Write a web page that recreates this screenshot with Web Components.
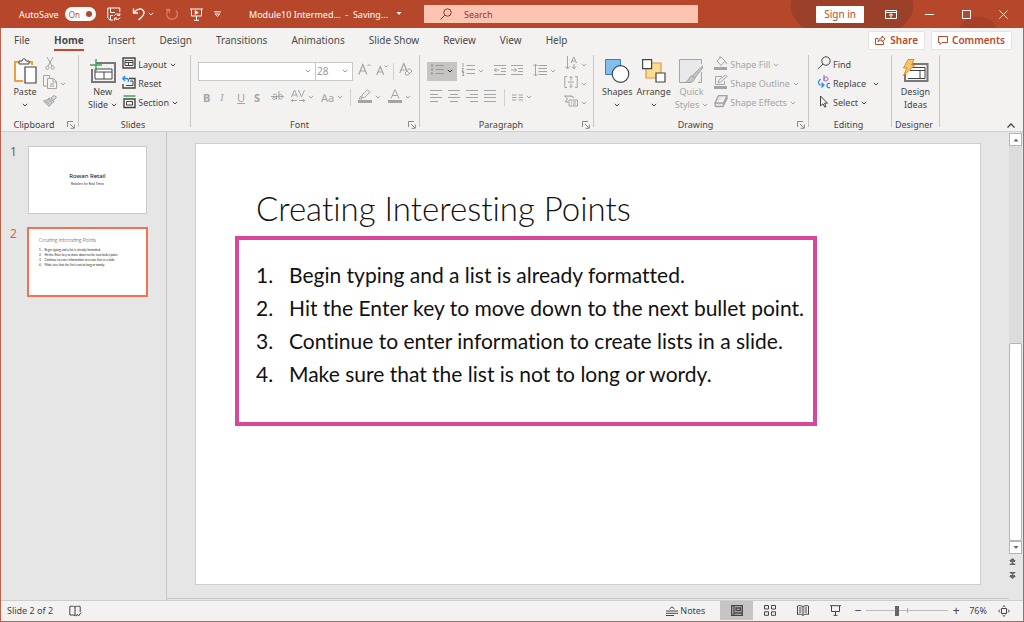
<!DOCTYPE html>
<html lang="en">
<head>
<meta charset="utf-8">
<title>Module10 Intermediate - PowerPoint</title>
<style>
body {
    margin: 0;
    font: 9px/13px "Noto Sans", "Open Sans", sans-serif;
    color: #444;
}
</style>
</head>
<body>
<pp-app></pp-app>
<script>
// every svg uses currentColor so that disabled tools only need a text colour
const ICONS = {
    caret: [6, 4, '<path d="M.8.8 3 3 5.200.8"/>'],
    down: [6, 4, '<path d="M.5 0h5L3 3z" fill="currentColor" stroke="none"/>'],
    up: [6, 4, '<path d="M.5 3.500h5L3 .5z" fill="currentColor" stroke="none"/>'],
    save: [14, 14, '<path d="M6 13H3L.8 11V1h12v4M3.500 1v4.500H8M3.500 13V8.500H6"/><path d="M7.500 8.500a3 3 0 0 1 5-.5M12.800 6v2.500h-2.500M13 10.500a3 3 0 0 1-5 1M7.500 13.500v-2.500H10"/>'],
    undo: [14, 14, '<path d="M1.500 1.500v4.500H6M1.800 5.800C4 2.500 8 .8 10.500 2.800 14.500 6 10 10 6.500 13" stroke-width="1.300"/>'],
    redo: [14, 14, '<path d="M3.500 3A5.300 5.300 0 1 0 11 3.500M1 2.500h3.500V6" stroke-width="1.300"/>'],
    present: [13, 13, '<path d="M0 1h13M1.500 1v7h10V1M6.500 8v4M4 12.300h5"/><path d="M5.200 2.700v3.600l3-1.800z" fill="currentColor"/>'],
    overflow: [7, 6, '<path d="M0 .8h7"/><path d="M1 3h5l-2.500 2.500z"/>'],
    search: [12, 12, '<circle cx="7.500" cy="4.500" r="3.700"/><path d="M4.800 7.200.5 11.500"/>'],
    find: [14, 14, '<circle cx="9" cy="5" r="4.200"/><path d="M6 8 .8 13"/>'],
    options: [12, 9, '<path d="M.5.5h11v8H.5zM.5 2.500h11" /><path d="M6 8V4M4 5.500 6 3.800l2 1.700"/>'],
    min: [9, 9, '<path d="M0 4.500h9"/>'],
    max: [9, 9, '<path d="M.5.5h8v8h-8z"/>'],
    close: [9, 9, '<path d="m.5.5 8 8M8.500.5l-8 8"/>'],
    share: [11, 10, '<path d="M3 3.500H.5v6h8V7M3 7c.3-3 2-4 4-4V1l3.200 3L7 7V5C5 5 4 5.500 3 7z"/>'],
    comment: [10, 9, '<path d="M.5.5h9v6H4L2 8.500v-2H.5z"/>'],
    paste: [24, 26, '<path d="M6 4H2v19h8M16 4h3v3" stroke="#e8a33d" stroke-width="2"/><path d="M3 5h15v17H3z" fill="#fafafa" stroke="none"/><path d="M6 6V3h3c0-3 4-3 4 0h3v3z" fill="#f8f8f8"/><path d="M12 9h11v16H12z" fill="#fff" stroke-width="1.200"/>'],
    cut: [14, 13, '<path d="M4 0l5 9M10 0 5 9"/><circle cx="4.300" cy="10.700" r="1.600"/><circle cx="9.700" cy="10.700" r="1.600"/>'],
    copy: [14, 14, '<path d="M4 11H.5V.5h6V3M4.500 3.500h6l3 3v7h-9zM10 3.500V7h3.500M7 9h4M7 11h4"/>'],
    painter: [14, 12, '<path d="m8 3 3-2.500 2.500 1.500L11 5z" fill="#ddd"/><path d="M6 3 11 6.500 9.500 8 5 4zM5 4.500.5 6 6 11.500 9 8M3 6.500l3 2" fill="#ccc"/>'],
    newslide: [26, 24, '<path d="M6 4h19v19H2v-13" stroke-width="2" stroke="#777"/><path d="M5 10h17v10H5zM5 13h17M14 13v7" fill="#fff"/><path d="M6 0v12M0 6h12" stroke="#41a35a" stroke-width="1.400"/>'],
    layout: [14, 12, '<path d="M1 1h12v10H1z" stroke-width="1.400"/><path d="M3 3.500h8v5H3zM3 5.500h8M6.500 5.500v3"/>'],
    reset: [14, 13, '<path d="M7 2.500h6v9.500H1V8" stroke-width="1.400"/><path d="M8 5h3v4.500H4"/><path d="M3 0 .8 2.500 3 5M1 2.500h3.500c2 0 2.500 2 1.500 3.500" stroke="#2b88d8" stroke-width="1.300"/>'],
    section: [13, 13, '<path d="M.5 1h12" stroke="#41a35a" stroke-width="1.500"/><path d="M1 4h11v8.500H1z" stroke-width="1.400"/><path d="M3.500 6.500h6V10h-6z"/>'],
    growA: [13, 13, '<path d="m.8 11.500 4-10 4 10M2.300 8h5" stroke-width="1.200"/><path d="m9.500 3 1.500-1.500L12.500 3"/>'],
    shrinkA: [12, 12, '<path d="m.8 11 3.500-8.500 3.500 8.500M2 8h4.500" stroke-width="1.200"/><path d="m8.500 1.500 1.500 1.500 1.500-1.500"/>'],
    clear: [14, 13, '<path d="m.8 10 4-9.500 3 7M2.300 7H7" stroke-width="1.200"/><path d="m6 10 4-4.500L13 8l-4 4H7zM8 8l2.500 2.500"/>'],
    strike: [13, 12, '<path d="M0 6.500h13"/><path d="M2 5c1-1.500 3.500-1 3.500.5V9.500M5.500 7C3 7 1.500 7.500 1.500 8.500s3 1.500 4-.5M8 1v8.500M8 6c1-2.500 3.500-1.500 3.500.8S9 10 8 8"/>'],
    spacing: [14, 14, '<path d="m.5 8 3-7 3 7M1.500 6h4M7.500 1l3 7 3-7"/><path d="M0 11.500h6M2 9.800.3 11.500 2 13.200M8 11.500h6M12 9.800l1.700 1.700L12 13.200"/>'],
    pen: [14, 14, '<path d="m3.500 9 .7-3L9.500.8l2.300 2.400L6.500 8.500zM3 7c-1 1-1.500 2-2 3h3"/><path d="M0 12.500h14" stroke-width="3"/>'],
    colorA: [14, 14, '<path d="m3 9.500 4-9 4 9M4.500 6.500h5"/><path d="M0 12.500h14" stroke-width="3"/>'],
    bullets: [13, 13, '<path d="M4.500 2.500H13M4.500 6.500H13M4.500 10.500H13"/><path d="M0 2.500h2M0 6.500h2M0 10.500h2" stroke-width="2"/>'],
    numbers: [13, 13, '<path d="M4.500 2.500H13M4.500 6.500H13M4.500 10.500H13M1 0v4M0 5.500h1.500L0 8.500h2M0 9.500h2l-1 1.500L2 12.500H0"/>'],
    outdent: [12, 12, '<path d="M0 1.500h12M7 4.500h5M7 7.500h5M0 10.500h12M0 6h5.500M2.500 4 .5 6l2 2"/>'],
    indent: [12, 12, '<path d="M0 1.500h12M7 4.500h5M7 7.500h5M0 10.500h12M0 6h5.500M3.500 4l2 2-2 2"/>'],
    lines: [14, 14, '<path d="M5.500 2.500H14M5.500 5.500H14M5.500 8.500H14M5.500 11.500H14M2.500 1v12M.5 3l2-2 2 2M.5 11l2 2 2-2"/>'],
    left: [13, 12, '<path d="M0 .5h12M0 4.500h8M0 7.500h12M0 11.500h8"/>'],
    center: [13, 12, '<path d="M0 .5h12M2 4.500h8M0 7.500h12M2 11.500h8"/>'],
    right: [13, 12, '<path d="M0 .5h12M4 4.500h8M0 7.500h12M4 11.500h8"/>'],
    justify: [13, 12, '<path d="M0 .5h12M0 4.500h12M0 7.500h12M0 11.500h12"/>'],
    columns: [11, 7, '<path d="M0 1h4.500M0 3.500h4.500M0 6h4.500M6.500 1H11M6.500 3.500H11M6.500 6H11"/>'],
    textdir: [14, 14, '<path d="M3.500 0v12M1.500 10.500l2 2.500 2-2.500M10 8v4.500M8 10.500l2 2.500 2-2.500M7 7l2.800-6L12.500 7M8 5h3.500"/>'],
    aligntext: [14, 12, '<path d="M3 .5H.8v11H3M11 .5h2.200v11H11M4 6h6M7 .5v4M5.500 2 7 .5 8.500 2M7 7.500v4M5.500 10 7 11.500 8.500 10"/>'],
    smartart: [14, 12, '<path d="M0 1h8l2 2M1 1l2.500 3L1 7h3" fill="#ccc"/><path d="M5 5h8.500v6H5zM7 7h1M9 7h3M7 9h1M9 9h3"/>'],
    shapes: [24, 24, '<path d="M.5.5h15v15H.5z" fill="#83beec" stroke="#2f83cc"/><circle cx="15.500" cy="15" r="8.300" fill="#fff" stroke="#444" stroke-width="1.200"/>'],
    arrange: [24, 24, '<path d="M4 4h15v15H4z" fill="#fbdc92" stroke="#e8963a" stroke-width="1.200"/><path d="M.6.6h9v9h-9zM14 14h9v9h-9z" fill="#fff" stroke="#444" stroke-width="1.200"/>'],
    quick: [24, 25, '<path d="M12 23.500H.5V.5h22V5M22.500 13v10.500H19" fill="#e9e9ec"/><path d="m23.500 7-10 9.500 2.500 2.500L23.500 9zM13 17c-3 0-3.500 5-6 6 4 1.500 8 0 9-4z" fill="#c4c4c4"/>'],
    fill: [14, 14, '<path d="m3 5 4-4 4 4-4 4.500zM6 2v-2M11 5l2 3"/><path d="M0 12.500h13" stroke-width="3"/>'],
    outline: [14, 14, '<path d="M8 1.500H1.500v8h9V6M4 8l1-3 6.500-5L13 1.500 6.500 7z"/><path d="M0 12.500h13" stroke-width="3"/>'],
    effects: [14, 12, '<path d="m1 8 3.500-7.300H13L9.500 8zM1 8v2.500l1 1h7l4-8V.7M9.500 8v3" fill="#e5e5e5" stroke-width="1.300"/>'],
    replace: [13, 14, '<path d="M6 0v6M6 3.500c.5-2 4-2 4 .5S6.500 6.500 6 4.500" stroke="#b146c2"/><path d="M12 8.500c-4-1.500-4 5.500 0 4M2.500 4C0 6 0 9 2 10h3M3.500 7.800 6 10l-2.500 2.500" stroke="#2b88d8" stroke-width="1.200"/>'],
    select: [10, 13, '<path d="M1.500 1v10L4 8.800l1.700 3.400L7 11.500 5.500 8.200h3z"/>'],
    ideas: [27, 25, '<path d="M9 5h16.500v17H3v-7" stroke-width="2" stroke="#777"/><path d="M8 8.500h15v11H6M8 11.500h15M18 11.500v8" fill="#fff"/><path d="M6 .5h6L9.500 6H13L1.500 16.500 5 9H1.500z" fill="#fbc466" stroke="#e08a1e"/>'],
    launcher: [8, 8, '<path d="M.5 6V.5H6M3 3l4 4M7.300 3.500v3.800H3.500"/>'],
    collapse: [8, 5, '<path d="m.5 4.500 3.500-3.500 3.500 3.500" stroke-width="1.300"/>'],
    book: [12, 12, '<path d="M6 2v8M6 2C4.500 1 2.500 1 .8 1.500v8.500H5L6 11l2-1M6 2c1.500-1 3.500-1 5.200-.5V7M8 9l1.500 2L12 7.500"/>'],
    notes: [12, 10, '<path d="M0 5h12M0 7.300h12M0 9.500h8M3.500 3 6 .8 8.500 3"/>'],
    normal: [12, 11, '<path d="M.7.700h10.600v9.600H.7zM3 1v9M3 8h8M5 3h4.500v2.500H5z" stroke-width="1.300"/>'],
    sorter: [12, 11, '<path d="M.5.5h4v3.500h-4zM7.500.5h4v3.500h-4zM.5 6.800h4v3.500h-4zM7.500 6.800h4v3.500h-4z"/>'],
    reading: [12, 11, '<path d="M6 1.500v9M6 1.500C4 .5 2 .5.5 1v8.500C2 9 4 9 6 10.300 8 9 10 9 11.500 9.500V1C10 .5 8 .5 6 1.500M2 3h2.500M2 5h2.500M2 7h2.500M7.500 3H10M7.500 5H10M7.500 7H10"/>'],
    show: [11, 11, '<path d="M0 .7h11M1.500 1v5.500h8V1M5.500 6.500v4M3.500 10.300h4"/>'],
    fit: [12, 12, '<path d="M3.500 3.500h5v5h-5zM4.500 2 6 .6 7.500 2M4.500 10 6 11.400 7.500 10M2 4.500.6 6 2 7.500M10 4.500 11.400 6 10 7.500"/>'],
    prev: [7, 7, '<path d="M0 3h7L3.500 0zM0 7h7L3.500 4z" fill="currentColor" stroke="none"/><path d="M1 3.500h5"/>'],
    next: [7, 7, '<path d="M0 0h7L3.500 3zM0 4h7L3.500 7z" fill="currentColor" stroke="none"/><path d="M1 3.500h5"/>']
};

function define(name, html, setup) {
    const template = document.createElement('template');
    template.innerHTML = html;
    customElements.define(name, class extends HTMLElement {
        constructor() {
            super();
            this.attachShadow({ mode: 'open' });
        }
        connectedCallback() {
            if (this.shadowRoot.firstChild) return;
            this.shadowRoot.appendChild(template.content.cloneNode(true));
            if (setup) setup(this, this.shadowRoot);
        }
    });
}

define('pp-icon', `
<style>
:host { display: inline-flex; flex: none; }
svg { display: block; fill: none; stroke: currentColor; stroke-width: 1; overflow: visible; }
</style>
<svg aria-hidden="true"></svg>
`, (el, root) => {
    const [w, h, body] = ICONS[el.getAttribute('name')];
    const svg = root.querySelector('svg');
    svg.setAttribute('width', w);
    svg.setAttribute('height', h);
    svg.setAttribute('viewBox', `0 0 ${w} ${h}`);
    svg.innerHTML = body;
});

// ribbon button: <pp-tool icon label caret big off>
define('pp-tool', `
<style>
:host { display: inline-flex; color: #444; }
:host([off]) { color: #a4a4a4; }
:host([active]) { background: #c6c5c4; color: #999; padding: 0 4px; }
:host([active]) .caret { color: #333; }
button {
    display: inline-flex;
    align-items: center;
    min-height: 19px;
    padding: 0;
    border: 0;
    background: none;
    color: inherit;
    font: inherit;
    white-space: nowrap;
}
:host([big]) button { flex-direction: column; justify-content: flex-start; }
:host([big]) .pic { height: 28px; display: flex; align-items: center; }
:host([icon][label]:not([big])) .pic { min-width: 14px; margin-right: 2px; }
.text { display: block; }
.text:empty { display: none; }
.caret { margin-left: 3px; }
:host([split]) .caret { margin-left: 7px; }
.last { display: flex; align-items: center; min-height: 13px; }
.last .text:empty + .caret { margin-left: 0; }
</style>
<button type="button"><span class="pic"></span></button>
`, (el, root) => {
    const button = root.querySelector('button');
    const caret = el.hasAttribute('caret') ? '<pp-icon class="caret" name="caret"></pp-icon>' : '';
    const label = el.getAttribute('label') || '';
    root.querySelector('.pic').innerHTML = el.getAttribute('icon')
        ? `<pp-icon name="${el.getAttribute('icon')}"></pp-icon>` : '<slot></slot>';
    if (el.hasAttribute('big')) {
        const second = el.getAttribute('second') || '';
        button.insertAdjacentHTML('beforeend',
            `<span class="text">${label}</span><span class="last"><span class="text">${second}</span>${caret}</span>`);
    } else {
        button.insertAdjacentHTML('beforeend', `<span class="text">${label}</span>${caret}`);
    }
    if (!label) button.setAttribute('aria-label', el.getAttribute('title') || el.getAttribute('icon'));
});

define('pp-titlebar', `
<style>
:host {
    display: flex;
    align-items: center;
    height: 28px;
    color: #fff;
    background:
        radial-gradient(ellipse 62px 36px at 852px 6px, #9b412a 98%, transparent),
        radial-gradient(circle at 978px 38px, #a84028 21px, transparent 22px),
        #b7472a;
}
button { display: inline-flex; align-items: center; border: 0; padding: 0; background: none; color: inherit; font: inherit; }
.quick { display: flex; align-items: center; flex: 0 0 230px; padding-left: 19px; box-sizing: border-box; gap: 11px; }
.auto { display: flex; align-items: center; gap: 6px; }
.switch { background: #fff; color: #b7472a; border-radius: 7px; height: 14px; width: 31px; padding: 0 4px; box-sizing: border-box; justify-content: space-between; font-size: 8px; }
.switch i { width: 6px; height: 6px; border-radius: 50%; background: #b7472a; }
.undo { gap: 2px; }
.dim { color: #dd7a63; }
.doc { flex: 0 0 194px; padding-left: 19px; box-sizing: border-box; gap: 8px; white-space: pre; }
.search { flex: 0 1 274px; display: flex; align-items: center; gap: 12px; height: 18px; padding: 0 16px; box-sizing: border-box; background: #fdc5b1; color: #93303a; }
input { flex: 1; min-width: 0; border: 0; padding: 0; background: none; font: inherit; color: inherit; outline: 0; }
input::placeholder { color: inherit; opacity: 1; }
.win { margin-left: auto; display: flex; align-items: center; gap: 28px; padding-right: 16px; }
.sign { background: #fff; color: #b7472a; padding: 0 8px; height: 17px; margin-right: -7px; font-size: 10px; border-radius: 1px; }
</style>
<div class="quick">
  <span class="auto"><span id="auto">AutoSave</span><button class="switch" role="switch" aria-checked="true" aria-labelledby="auto">On<i></i></button></span>
  <button aria-label="Save"><pp-icon name="save"></pp-icon></button>
  <button class="undo" aria-label="Undo"><pp-icon name="undo"></pp-icon><pp-icon name="caret"></pp-icon></button>
  <button class="dim" aria-label="Redo"><pp-icon name="redo"></pp-icon></button>
  <button aria-label="Start slide show"><pp-icon name="present"></pp-icon></button>
  <button aria-label="Customize toolbar"><pp-icon name="overflow"></pp-icon></button>
</div>
<button class="doc"><span>Module10 Intermed...  -  Saving...</span><pp-icon name="down"></pp-icon></button>
<label class="search"><pp-icon name="search"></pp-icon><input type="search" placeholder="Search" aria-label="Search"></label>
<div class="win">
  <button class="sign">Sign in</button>
  <button aria-label="Ribbon options"><pp-icon name="options"></pp-icon></button>
  <button aria-label="Minimize"><pp-icon name="min"></pp-icon></button>
  <button aria-label="Maximize"><pp-icon name="max"></pp-icon></button>
  <button aria-label="Close"><pp-icon name="close"></pp-icon></button>
</div>
`);

define('pp-tabs', `
<style>
:host { display: flex; align-items: center; height: 24px; padding: 0 11px 0 13px; font-size: 10px; }
nav { display: flex; gap: 24px; flex: 1; }
a { color: #4a4a4a; text-decoration: none; line-height: 17px; border-bottom: 2px solid transparent; margin-top: 2px; }
a[aria-current] { font-weight: 700; border-color: #c2492b; }
button { display: flex; align-items: center; gap: 4px; height: 19px; padding: 0 6px; margin-left: 6px; border: 1px solid #e6e3e1; border-radius: 2px; background: #fff; color: #b7472a; font: inherit; font-weight: 600; }
</style>
<nav>
  <a href="#">File</a><a href="#" aria-current="page">Home</a><a href="#">Insert</a><a href="#">Design</a><a href="#">Transitions</a><a href="#">Animations</a><a href="#">Slide Show</a><a href="#">Review</a><a href="#">View</a><a href="#">Help</a>
</nav>
<button><pp-icon name="share"></pp-icon>Share</button>
<button><pp-icon name="comment"></pp-icon>Comments</button>
`);

define('pp-group', `
<style>
:host {
    display: flex;
    flex-direction: column;
    box-sizing: border-box;
    padding-right: 1px;
    margin-top: 3px;
    background: linear-gradient(#c8c6c4, #c8c6c4) right top / 1px 72px no-repeat;
}
.body { flex: 1; display: flex; }
footer { display: flex; align-items: center; height: 13px; padding-right: 3px; }
footer span { flex: 1; text-align: center; white-space: nowrap; }
button { display: flex; border: 0; padding: 0; background: none; color: #888; }
</style>
<div class="body"><slot></slot></div>
<footer><span></span></footer>
`, (el, root) => {
    root.querySelector('span').textContent = el.getAttribute('label');
    if (el.hasAttribute('launcher')) {
        root.querySelector('footer').insertAdjacentHTML('beforeend',
            `<button aria-label="${el.getAttribute('label')} settings"><pp-icon name="launcher"></pp-icon></button>`);
    }
});

define('pp-ribbon', `
<style>
:host { display: flex; height: 79px; border-bottom: 1px solid #d2d0ce; }
.col { display: flex; flex-direction: column; align-items: flex-start; }
.row { display: flex; align-items: center; height: 26px; }
.set { display: flex; align-items: center; gap: 5px; }
.big { padding-top: 2px; }
.clip { width: 78px; }
.slides { width: 112px; }
.font { width: 229px; }
.para { width: 174px; }
.draw { width: 215px; }
.edit { width: 83px; }
.ideas { width: 48px; }
.clip .big { margin: 0 6px 0 12px; }
.slides .big { margin: 0 5px 0 9px; }
.ideas .big { margin: 0 auto; }
.draw .bigs { display: flex; gap: 4px; padding: 0 6px 0 8px; }
.edit .col { padding-left: 8px; }
.para .col { padding-left: 8px; }
.rows { padding: 3px 0 0 7px; }
.fields { display: flex; }
.field { display: flex; align-items: center; height: 19px; box-sizing: border-box; border: 1px solid #c8c8c8; background: #fff; color: #999; padding-right: 4px; }
.field + .field { border-left: 0; }
select { appearance: none; border: 0; background: none; font: inherit; font-size: 10px; color: inherit; padding: 0 1px; flex: 1; min-width: 0; }
.name { width: 118px; }
.size { width: 37px; }
.sep { width: 1px; height: 17px; background: #d2d0ce; }
.fontrow { gap: 5px; }
.letters { padding-left: 5px; gap: 7px; font-size: 11px; }
.letter { width: 10px; }
.letter i { font-family: "Liberation Serif", serif; }
.lists { gap: 10px; }
.aligns { gap: 7px; padding-left: 3px; }
.end { margin-left: auto; align-self: flex-end; padding: 0 8px 3px 0; }
.end button { border: 0; padding: 0; background: none; display: flex; color: #444; }
</style>
<pp-group class="clip" label="Clipboard" launcher>
  <pp-tool class="big" big icon="paste" label="Paste" caret></pp-tool>
  <div class="col">
    <pp-tool off icon="cut"></pp-tool>
    <pp-tool off icon="copy" caret></pp-tool>
    <pp-tool off icon="painter"></pp-tool>
  </div>
</pp-group>
<pp-group class="slides" label="Slides">
  <pp-tool class="big" big icon="newslide" label="New" second="Slide" caret></pp-tool>
  <div class="col">
    <pp-tool icon="layout" label="Layout" caret></pp-tool>
    <pp-tool icon="reset" label="Reset"></pp-tool>
    <pp-tool icon="section" label="Section" caret></pp-tool>
  </div>
</pp-group>
<pp-group class="font" label="Font" launcher>
  <div class="rows">
    <div class="row fontrow">
      <div class="fields">
        <span class="field name"><select aria-label="Font name"><option></option></select><pp-icon name="caret"></pp-icon></span>
        <span class="field size"><select aria-label="Font size"><option>28</option></select><pp-icon name="caret"></pp-icon></span>
      </div>
      <pp-tool off icon="growA"></pp-tool>
      <pp-tool off icon="shrinkA"></pp-tool>
      <span class="sep"></span>
      <pp-tool off icon="clear"></pp-tool>
    </div>
    <div class="row letters">
      <pp-tool class="letter" off title="Bold"><b>B</b></pp-tool>
      <pp-tool class="letter" off title="Italic"><i>I</i></pp-tool>
      <pp-tool class="letter" off title="Underline"><u>U</u></pp-tool>
      <pp-tool class="letter" off title="Shadow"><b>S</b></pp-tool>
      <pp-tool off icon="strike"></pp-tool>
      <pp-tool off icon="spacing" caret></pp-tool>
      <pp-tool off label="Aa" caret></pp-tool>
      <span class="sep"></span>
      <pp-tool off icon="pen" caret></pp-tool>
      <pp-tool off icon="colorA" caret></pp-tool>
    </div>
  </div>
</pp-group>
<pp-group class="para" label="Paragraph" launcher>
  <div class="rows">
    <div class="row lists">
      <div class="set">
        <pp-tool active icon="bullets" caret></pp-tool>
        <pp-tool off icon="numbers" caret></pp-tool>
      </div>
      <div class="set">
        <pp-tool off icon="outdent"></pp-tool>
        <pp-tool off icon="indent"></pp-tool>
      </div>
      <pp-tool off icon="lines" caret></pp-tool>
    </div>
    <div class="row aligns">
      <div class="set">
        <pp-tool off icon="left"></pp-tool>
        <pp-tool off icon="center"></pp-tool>
        <pp-tool off icon="right"></pp-tool>
        <pp-tool off icon="justify"></pp-tool>
      </div>
      <span class="sep"></span>
      <pp-tool off icon="columns" caret></pp-tool>
    </div>
  </div>
  <div class="col">
    <pp-tool off icon="textdir" caret></pp-tool>
    <pp-tool off icon="aligntext" caret></pp-tool>
    <pp-tool off icon="smartart" caret></pp-tool>
  </div>
</pp-group>
<pp-group class="draw" label="Drawing" launcher>
  <div class="bigs">
    <pp-tool class="big" big icon="shapes" label="Shapes" caret></pp-tool>
    <pp-tool class="big" big icon="arrange" label="Arrange" caret></pp-tool>
    <pp-tool class="big" big off icon="quick" label="Quick" second="Styles" caret></pp-tool>
  </div>
  <div class="col">
    <pp-tool off icon="fill" label="Shape Fill" caret></pp-tool>
    <pp-tool off icon="outline" label="Shape Outline" caret></pp-tool>
    <pp-tool off icon="effects" label="Shape Effects" caret></pp-tool>
  </div>
</pp-group>
<pp-group class="edit" label="Editing">
  <div class="col">
    <pp-tool icon="find" label="Find"></pp-tool>
    <pp-tool icon="replace" label="Replace" caret split></pp-tool>
    <pp-tool icon="select" label="Select" caret></pp-tool>
  </div>
</pp-group>
<pp-group class="ideas" label="Designer">
  <pp-tool class="big" big icon="ideas" label="Design" second="Ideas"></pp-tool>
</pp-group>
<div class="end"><button aria-label="Collapse ribbon"><pp-icon name="collapse"></pp-icon></button></div>
`);

define('pp-thumb', `
<style>
:host { display: flex; align-items: flex-start; color: #666; }
.num { width: 18px; font-size: 12px; line-height: 12px; }
.page { flex: 1; aspect-ratio: 7 / 4; box-sizing: border-box; border: 1px solid #c8c8c8; background: #fff; color: #222; overflow: hidden; }
:host([selected]) { color: #d9603f; }
:host([selected]) .page { border-color: #f4724f; box-shadow: 0 0 0 1px #f4724f; }
</style>
<span class="num"></span>
<div class="page"><slot></slot></div>
`, (el, root) => {
    root.querySelector('.num').textContent = el.getAttribute('number');
});

define('pp-slides-pane', `
<style>
:host { display: flex; flex-direction: column; gap: 14px; width: 166px; box-sizing: border-box; padding: 14px 19px 0 9px; border-right: 1px solid #c6c6c6; }
.cover { text-align: center; padding-top: 25px; }
.cover b { display: block; font: 400 6px/9px "Noto Sans", sans-serif; color: #000; }
.cover span { display: block; font-size: 3px; line-height: 6px; }
.list { padding: 8px 0 0 10px; font: 3px/5px Lato, sans-serif; white-space: nowrap; }
.list b { display: block; font: 300 5px/7px Lato, sans-serif; margin-bottom: 4px; }
.list p { margin: 0; display: flex; gap: 3px; }
</style>
<pp-thumb number="1"><div class="cover"><b>Rowan Retail</b><span>Retailers for Real Times</span></div></pp-thumb>
<pp-thumb number="2" selected><div class="list"><b>Creating Interesting Points</b>
  <p><span>1.</span>Begin typing and a list is already formatted.</p>
  <p><span>2.</span>Hit the Enter key to move down to the next bullet point.</p>
  <p><span>3.</span>Continue to enter information to create lists in a slide.</p>
  <p><span>4.</span>Make sure that the list is not to long or wordy.</p>
</div></pp-thumb>
`);

define('pp-slide', `
<style>
:host { display: block; aspect-ratio: 16 / 9; box-sizing: border-box; border: 1px solid #cfcfcf; background: #fff; color: #111; font-family: Lato, "Open Sans", sans-serif; font-variant-ligatures: none; }
h1 { margin: 0; padding: 43px 0 7px 60px; font-size: 33px; line-height: 42px; font-weight: 300; }
ol { list-style: none; margin: 0 0 0 39px; width: fit-content; box-sizing: border-box; padding: 18px 9px 32px 17px; border: 4px solid #d9479a; font-size: 21px; line-height: 33px; white-space: nowrap; }
li { display: flex; }
li span { width: 33px; }
</style>
<h1>Creating Interesting Points</h1>
<ol>
  <li><span>1.</span>Begin typing and a list is already formatted.</li>
  <li><span>2.</span>Hit the Enter key to move down to the next bullet point.</li>
  <li><span>3.</span>Continue to enter information to create lists in a slide.</li>
  <li><span>4.</span>Make sure that the list is not to long or wordy.</li>
</ol>
`);

define('pp-scrollbar', `
<style>
:host { display: flex; flex-direction: column; align-items: stretch; width: 13px; }
button { display: flex; align-items: center; justify-content: center; height: 13px; box-sizing: border-box; padding: 0; border: 1px solid #b5b5b5; background: #fff; color: #666; }
.track { flex: 1; display: flex; flex-direction: column; background: #dcdcdc; }
.track::before { content: ""; flex: 1; }
.thumb { flex: 1; box-sizing: border-box; border: 1px solid #b5b5b5; border-radius: 2px; background: #fff; }
.plain { border: 0; background: none; height: 14px; }
.pair { padding-bottom: 18px; }
</style>
<button aria-label="Scroll up"><pp-icon name="up"></pp-icon></button>
<div class="track"><div class="thumb"></div></div>
<button aria-label="Scroll down"><pp-icon name="down"></pp-icon></button>
<div class="pair">
  <button class="plain" aria-label="Previous slide"><pp-icon name="prev"></pp-icon></button>
  <button class="plain" aria-label="Next slide"><pp-icon name="next"></pp-icon></button>
</div>
`);

define('pp-status', `
<style>
:host { display: flex; align-items: center; height: 19px; border-top: 1px solid #cfcdcb; border-bottom: 1px solid #f3f2f1; background: #f3f2f1; padding-left: 6px; }
button { display: flex; align-items: center; justify-content: center; gap: 2px; padding: 0; border: 0; background: none; color: inherit; font: inherit; height: 100%; }
.book { margin-left: 16px; }
.right { margin-left: auto; display: flex; align-items: center; height: 100%; padding-right: 13px; }
.notes { margin-right: 15px; }
.view { width: 33px; }
.view[aria-pressed] { background: #c6c5c4; }
.zoom { display: flex; align-items: center; gap: 4px; margin-left: 2px; }
.zoom button { font-size: 12px; width: 8px; }
input {
    appearance: none;
    width: 82px;
    height: 12px;
    margin: 0;
    background:
        linear-gradient(#aaa, #aaa) 50% 50% / 1px 5px no-repeat,
        linear-gradient(#bbb, #bbb) 0 50% / 100% 1px no-repeat;
}
input::-webkit-slider-thumb { appearance: none; width: 4px; height: 10px; background: #666; }
.pct { margin: 0 11px 0 9px; }
</style>
<span>Slide 2 of 2</span>
<button class="book" aria-label="Spelling"><pp-icon name="book"></pp-icon></button>
<div class="right">
  <button class="notes"><pp-icon name="notes"></pp-icon>Notes</button>
  <button class="view" aria-label="Normal" aria-pressed="true"><pp-icon name="normal"></pp-icon></button>
  <button class="view" aria-label="Slide sorter"><pp-icon name="sorter"></pp-icon></button>
  <button class="view" aria-label="Reading view"><pp-icon name="reading"></pp-icon></button>
  <button class="view" aria-label="Slide show"><pp-icon name="show"></pp-icon></button>
  <div class="zoom">
    <button aria-label="Zoom out">−</button>
    <input type="range" aria-label="Zoom" value="37">
    <button aria-label="Zoom in">+</button>
  </div>
  <button class="pct">76%</button>
  <button aria-label="Fit slide"><pp-icon name="fit"></pp-icon></button>
</div>
`);

define('pp-app', `
<style>
:host { display: flex; flex-direction: column; min-height: 100vh; box-sizing: border-box; background: #f3f2f1; border: solid #c4604a; border-width: 0 1px 1px; }
pp-titlebar { margin: 0 -1px; }
main { flex: 1; display: flex; background: #e6e6e6; }
.stage { flex: 1; min-width: 0; padding: 11px 28px 0; border-bottom: 1px solid #c6c6c6; margin-bottom: 1px; }
pp-scrollbar { margin: 1px 1px 0 0; }
</style>
<pp-titlebar></pp-titlebar>
<pp-tabs></pp-tabs>
<pp-ribbon></pp-ribbon>
<main>
  <pp-slides-pane></pp-slides-pane>
  <div class="stage"><pp-slide></pp-slide></div>
  <pp-scrollbar></pp-scrollbar>
</main>
<pp-status></pp-status>
`);
</script>
</body>
</html>
